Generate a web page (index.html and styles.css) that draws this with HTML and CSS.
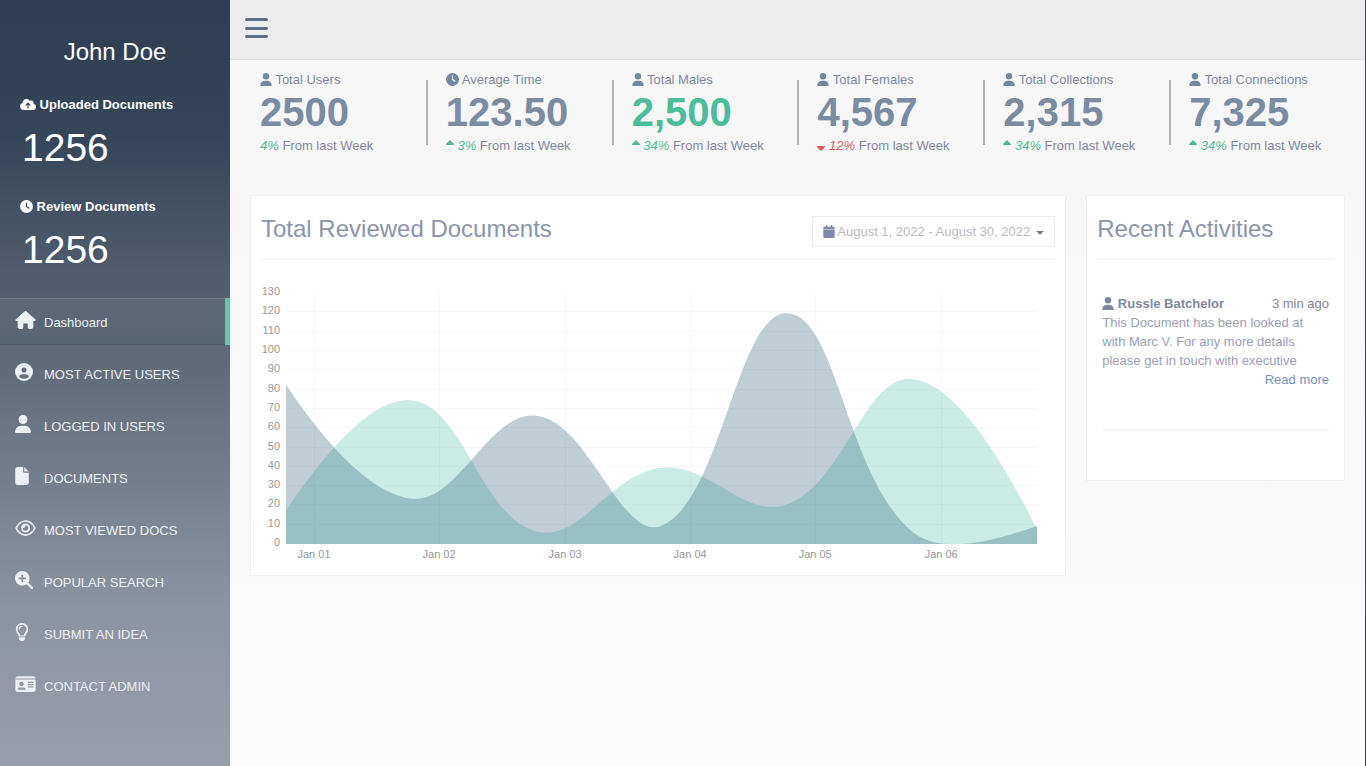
FILE: index.html
```html
<!DOCTYPE html>
<html lang="en">
<head>
<meta charset="utf-8">
<title>Dashboard</title>
<link rel="stylesheet" href="styles.css">
</head>
<body>
<svg class="sprite" aria-hidden="true">
  <symbol id="user" viewBox="0 0 448 512"><path d="M224 256A128 128 0 1 0 224 0a128 128 0 1 0 0 256zm-45.700 48C79.800 304 0 383.800 0 482.300 0 498.700 13.300 512 29.700 512h388.600c16.400 0 29.700-13.300 29.700-29.700 0-98.500-79.800-178.300-178.300-178.300z"/></symbol>
  <symbol id="clock" viewBox="0 0 512 512"><path d="M256 0a256 256 0 1 1 0 512A256 256 0 1 1 256 0zM232 120v136c0 8 4 15.500 10.700 20l96 64c11 7.400 25.900 4.400 33.300-6.700s4.400-25.900-6.700-33.300L280 243.200V120c0-13.300-10.700-24-24-24s-24 10.700-24 24z"/></symbol>
  <symbol id="cloud" viewBox="0 0 640 512"><path d="M144 480C64.500 480 0 415.500 0 336c0-62.800 40.200-116.200 96.200-135.900-.1-2.700-.2-5.400-.2-8.100 0-88.400 71.600-160 160-160 59.300 0 111 32.200 138.700 80.200C409.900 102 428.300 96 448 96c53 0 96 43 96 96 0 12.200-2.300 23.800-6.400 34.600C596 238.400 640 290.100 640 352c0 70.700-57.300 128-128 128zm79-217c-9.400 9.400-9.400 24.600 0 33.900s24.600 9.400 33.900 0l39-39V392c0 13.300 10.700 24 24 24s24-10.700 24-24V257.900l39 39c9.400 9.400 24.600 9.400 33.900 0s9.400-24.600 0-33.900l-80-80c-9.400-9.400-24.600-9.400-33.900 0z"/></symbol>
  <symbol id="home" viewBox="0 0 576 512"><path d="M575.800 255.500c0 18-15 32.100-32 32.100h-32l.7 160.200c.2 35.500-28.500 64.300-64 64.300H392c-22.100 0-40-17.900-40-40v-88c0-17.700-14.300-32-32-32h-64c-17.700 0-32 14.300-32 32v88c0 22.100-17.900 40-40 40h-55.900c-35.300 0-64-28.700-64-64V287.600H32c-18 0-32-14-32-32.100 0-9 3-17 10-24L266.400 8c7-7 15-8 22-8s15 2 21 7l255.400 224.500c8 7 12 15 11 24z"/></symbol>
  <symbol id="circle-user" viewBox="0 0 512 512"><path d="M399 384.200C376.900 345.800 335.400 320 288 320h-64c-47.400 0-88.900 25.800-111 64.200C148.200 423.400 199.200 448 256 448s107.800-24.700 143-63.800zM0 256a256 256 0 1 1 512 0A256 256 0 1 1 0 256zm256 16a72 72 0 1 0 0-144 72 72 0 1 0 0 144z"/></symbol>
  <symbol id="file" viewBox="0 0 384 512"><path d="M0 64C0 28.700 28.700 0 64 0h160v128c0 17.700 14.300 32 32 32h128v288c0 35.300-28.700 64-64 64H64c-35.300 0-64-28.700-64-64zm384 64H256V0z"/></symbol>
  <symbol id="eye" viewBox="0 0 576 512"><path d="M288 80c-65.200 0-118.800 29.600-159.900 67.700C89.600 183.500 63 226 49.400 256 63 286 89.600 328.500 128 364.300 169.200 402.400 222.800 432 288 432s118.800-29.600 159.900-67.700C486.400 328.500 513 286 526.600 256 513 226 486.400 183.500 448 147.700 406.800 109.600 353.200 80 288 80zM95.400 112.600C142.500 68.800 207.200 32 288 32s145.500 36.800 192.600 80.600c46.800 43.500 78.100 95.400 93 131.100 3.300 7.900 3.300 16.700 0 24.600-14.900 35.700-46.200 87.700-93 131.100C433.500 443.200 368.800 480 288 480s-145.500-36.800-192.600-80.600C48.600 356 17.300 304 2.500 268.300a32 32 0 0 1 0-24.600C17.300 208 48.600 156 95.400 112.600zM288 336c44.200 0 80-35.800 80-80s-35.800-80-80-80h-2c1.300 5.100 2 10.500 2 16 0 35.300-28.700 64-64 64-5.500 0-10.900-.7-16-2v2c0 44.200 35.800 80 80 80zm0-208a128 128 0 1 1 0 256 128 128 0 1 1 0-256z"/></symbol>
  <symbol id="search" viewBox="0 0 512 512"><path d="M416 208c0 45.900-14.900 88.300-40 122.700L502.600 457.400c12.500 12.500 12.500 32.800 0 45.300s-32.800 12.500-45.300 0L330.700 376C296.300 401.200 253.900 416 208 416 93.100 416 0 322.900 0 208S93.100 0 208 0s208 93.100 208 208zM184 296c0 13.300 10.700 24 24 24s24-10.700 24-24v-64h64c13.300 0 24-10.700 24-24s-10.700-24-24-24h-64v-64c0-13.300-10.700-24-24-24s-24 10.700-24 24v64h-64c-13.300 0-24 10.700-24 24s10.700 24 24 24h64z"/></symbol>
  <symbol id="bulb" viewBox="0 0 384 512"><path d="M297.200 248.900C311.600 228.300 320 203.200 320 176c0-70.700-57.300-128-128-128S64 105.300 64 176c0 27.200 8.400 52.300 22.800 72.900 20 28.500 46.100 61.900 54.800 103.100h100.800c8.700-41.200 34.800-74.600 54.800-103.100zM336 276c-20 28-40 54-46 92-2 10-8 16-18 16H112c-10 0-16-6-18-16-6-38-26-64-46-92-20-28-32-63-32-100a176 176 0 1 1 352 0c0 37-12 72-32 100zM104 408h176v24c0 44.200-35.800 80-80 80h-16c-44.200 0-80-35.800-80-80zM192 80c9 0 16 7 16 16s-7 16-16 16c-35 0-64 29-64 64 0 9-7 16-16 16s-16-7-16-16c0-53 43-96 96-96z"/></symbol>
  <symbol id="card" viewBox="0 0 576 512"><path d="M0 96c0-35.300 28.700-64 64-64h448c35.300 0 64 28.700 64 64zM0 128h576v288c0 35.300-28.700 64-64 64H64c-35.300 0-64-28.700-64-64zm64 277.300c0 5.900 4.800 10.700 10.700 10.700h202.600c5.900 0 10.700-4.800 10.700-10.700 0-29.500-23.900-53.300-53.300-53.300H117.300C87.900 352 64 375.900 64 405.300zM176 320a64 64 0 1 0 0-128 64 64 0 1 0 0 128zm176-128v32h160v-32zm0 64v32h160v-32zm0 64v32h160v-32z"/></symbol>
  <symbol id="calendar" viewBox="0 0 448 512"><path d="M96 32c0-43 64-43 64 0v32h128V32c0-43 64-43 64 0v32h48c26.500 0 48 21.500 48 48v48H0v-48c0-26.500 21.500-48 48-48h48zM0 176h448v288c0 26.500-21.500 48-48 48H48c-26.500 0-48-21.500-48-48z"/></symbol>
  <symbol id="up" viewBox="0 0 8 14"><path d="M4 2 8.200 6.200Q8.200 7 7.500 7h-7Q-.2 7-.2 6.200z"/></symbol>
  <symbol id="down" viewBox="0 0 8 14"><path d="M4 13 8.200 8.800Q8.200 8 7.500 8h-7Q-.2 8-.2 8.800z"/></symbol>
</svg>
<div class="page">
  <aside class="sidebar">
    <h2 class="profile">John Doe</h2>
    <section class="summary">
      <h3 class="summary-title"><svg class="icon wide"><use href="#cloud"/></svg> Uploaded Documents</h3>
      <p class="summary-value">1256</p>
    </section>
    <section class="summary">
      <h3 class="summary-title"><svg class="icon round"><use href="#clock"/></svg> Review Documents</h3>
      <p class="summary-value">1256</p>
    </section>
    <nav class="menu">
      <a class="menu-item active" href="#"><svg class="w-21"><use href="#home"/></svg><span>Dashboard</span></a>
      <a class="menu-item" href="#"><svg class="w-18"><use href="#circle-user"/></svg><span>MOST ACTIVE USERS</span></a>
      <a class="menu-item" href="#"><svg class="w-16"><use href="#user"/></svg><span>LOGGED IN USERS</span></a>
      <a class="menu-item" href="#"><svg class="w-14"><use href="#file"/></svg><span>DOCUMENTS</span></a>
      <a class="menu-item" href="#"><svg class="w-21"><use href="#eye"/></svg><span>MOST VIEWED DOCS</span></a>
      <a class="menu-item" href="#"><svg class="w-18"><use href="#search"/></svg><span>POPULAR SEARCH</span></a>
      <a class="menu-item" href="#"><svg class="w-14"><use href="#bulb"/></svg><span>SUBMIT AN IDEA</span></a>
      <a class="menu-item" href="#"><svg class="w-21"><use href="#card"/></svg><span>CONTACT ADMIN</span></a>
    </nav>
  </aside>
  <div class="content">
    <header class="topbar">
      <button class="toggle" type="button" aria-label="Toggle menu"><span></span><span></span><span></span></button>
    </header>
    <main class="main">
      <div class="stats">
        <section class="stat"><h4><svg class="icon"><use href="#user"/></svg> Total Users</h4><strong>2500</strong><p><em>4%</em> From last Week</p></section>
        <section class="stat"><h4><svg class="icon round"><use href="#clock"/></svg> Average Time</h4><strong>123.50</strong><p><em><svg class="caret"><use href="#up"/></svg> 3%</em> From last Week</p></section>
        <section class="stat"><h4><svg class="icon"><use href="#user"/></svg> Total Males</h4><strong class="green">2,500</strong><p><em><svg class="caret"><use href="#up"/></svg> 34%</em> From last Week</p></section>
        <section class="stat"><h4><svg class="icon"><use href="#user"/></svg> Total Females</h4><strong>4,567</strong><p><em class="red"><svg class="caret"><use href="#down"/></svg> 12%</em> From last Week</p></section>
        <section class="stat"><h4><svg class="icon"><use href="#user"/></svg> Total Collections</h4><strong>2,315</strong><p><em><svg class="caret"><use href="#up"/></svg> 34%</em> From last Week</p></section>
        <section class="stat"><h4><svg class="icon"><use href="#user"/></svg> Total Connections</h4><strong>7,325</strong><p><em><svg class="caret"><use href="#up"/></svg> 34%</em> From last Week</p></section>
      </div>
      <div class="panels">
        <section class="panel">
          <header class="panel-head">
            <h2>Total Reviewed Documents</h2>
            <button class="range" type="button"><svg class="icon"><use href="#calendar"/></svg><span>August 1, 2022 - August 30, 2022</span><i class="arrow"></i></button>
          </header>
          <svg class="chart" id="chart" viewBox="0 0 794 285" role="img" aria-label="Reviewed documents by day"></svg>
        </section>
        <section class="panel">
          <header class="panel-head"><h2>Recent Activities</h2></header>
          <article class="activity">
            <div class="activity-head"><b><svg class="icon"><use href="#user"/></svg> Russle Batchelor</b><time>3 min ago</time></div>
            <p>This Document has been looked at with Marc V. For any more details please get in touch with executive</p>
            <a href="#">Read more</a>
          </article>
        </section>
      </div>
    </main>
  </div>
</div>
<script src="chart.js"></script>
</body>
</html>
```
FILE: styles.css
```css
* { box-sizing: border-box; }
body {
  margin: 0;
  font: 13px/19px "Liberation Sans", Arial, sans-serif;
  color: #8088a0;
  background: #fcfcfd;
}
h2, h3, h4, p { margin: 0; font-weight: 400; }
a { text-decoration: none; }
svg { fill: currentColor; }
.sprite { display: none; }
.icon { width: 12px; height: 13px; vertical-align: -2px; }
.icon.round { width: 13px; }
.icon.wide { width: 16px; }

.page { display: flex; min-height: 100vh; border-right: 1px solid #3c3e42; }

.sidebar {
  flex: 0 0 230px;
  color: #fff;
  background: linear-gradient(#2e3e52, #35465a 18%, #525f70 38%, #66707f 52%, #7c8592 68%, #8d94a1 80%, #989eaa);
}
.profile { padding: 37px 0 27px; font-size: 24px; line-height: 30px; text-align: center; }
.summary { height: 102px; padding: 0 20px; }
.summary-title { font-size: 13px; font-weight: 700; line-height: 21px; }
.summary-value { padding: 9px 0 0 2px; font-size: 39px; line-height: 48px; }
.menu { display: flex; flex-direction: column; gap: 5px; }
.menu-item {
  display: flex;
  align-items: center;
  height: 47px;
  padding-left: 15px;
  color: #edf0f3;
}
.menu-item svg { height: 18px; margin-bottom: 4px; }
.menu-item span { flex: 1; padding: 1px 0 0 8px; }
.w-21 { width: 21px; }
.w-18 { width: 18px; margin-right: 3px; }
.w-16 { width: 16px; margin-right: 5px; }
.w-14 { width: 14px; margin-right: 7px; }
.menu-item.active {
  border-right: 5px solid #62c7ae;
  background: linear-gradient(#5b6877, #576675);
  box-shadow: inset 0 1px #6c7989, inset 0 -1px #4c5967;
}

.content { flex: 1; min-width: 0; background: linear-gradient(#f7f7f7 20%, #f9f9f9 75%, #fcfcfd 85%); }
.topbar { height: 60px; padding: 18px 15px; background: #ededed; border-bottom: 1px solid #dddfe2; }
.toggle {
  display: flex;
  flex-direction: column;
  justify-content: space-between;
  width: 23px;
  height: 20px;
  padding: 0;
  border: 0;
  background: none;
}
.toggle span { height: 3px; border-radius: 2px; background: #5f6f89; }
.main { padding: 10px; }
.stats { display: grid; grid-template-columns: repeat(6, 1fr); }
.stat { height: 125px; padding: 0 10px 0 20px; white-space: nowrap; }
.stat h4 { font-size: 13px; }
.stat strong { display: block; font-size: 40px; line-height: 46px; color: #7b8ba1; }
.stat p { line-height: 21px; }
.stat strong.green { color: #49be9a; }
.stat .icon { color: #7288a0; }
.stat em { color: #52bd94; }
.stat em.red { color: #e05a58; }
.stat .caret { width: 8px; height: 14px; vertical-align: -2px; }
.stat + .stat { background: linear-gradient(#b3b4b7, #b3b4b7) 0 10px / 2px 65px no-repeat; }
.panels { display: grid; grid-template-columns: 3fr 1fr; align-items: start; }
.panel { margin: 0 10px; padding: 10px; border: 1px solid #f0f0f2; background: #fff; min-width: 0; }
.panel-head {
  display: flex;
  justify-content: space-between;
  height: 54px;
  padding-top: 10px;
  border-bottom: 2px solid #f6f6f7;
}
.panel-head h2 { font-size: 24px; line-height: 26px; color: #8b95aa; white-space: nowrap; }
.range {
  display: flex;
  align-items: center;
  height: 31px;
  padding: 0 10px;
  border: 1px solid #ebecef;
  background: #fff;
  font: inherit;
  color: #bbbcc0;
}
.range .icon { margin-right: 2px; color: #8088a8; }
.arrow { margin: 3px 0 0 6px; border: 4px solid transparent; border-top-color: #777d84; border-bottom: 0; }
.chart { display: block; width: 100%; margin-top: 20px; font-size: 11px; }
.chart .grid { fill: none; stroke: #f7f7f8; stroke-width: 1; }
.chart text { fill: #96999c; }
.chart .y-label { text-anchor: end; }
.chart .x-label { text-anchor: middle; }
.chart .series-a { fill: rgba(38, 175, 145, 0.24); }
.chart .series-b { fill: rgba(20, 75, 98, 0.27); }
.activity { margin: 34px 5px 39px; padding-bottom: 40px; border-bottom: 2px solid #f7f7f8; }
.activity-head { display: flex; justify-content: space-between; }
.activity p { color: #98a0b2; }
.activity a { display: block; text-align: right; color: #7593c0; }
```
FILE: chart.js
```js
const chart = document.getElementById('chart');
const NS = 'http://www.w3.org/2000/svg';
const left = 25, right = 776, base = 264, zero = 263, unit = 1.93;

function add(name, attrs, text) {
  const el = document.createElementNS(NS, name);
  for (const key in attrs) el.setAttribute(key, attrs[key]);
  if (text !== undefined) el.textContent = text;
  chart.appendChild(el);
}

for (let v = 0; v <= 130; v += 10) {
  const y = Math.round(zero - v * unit);
  if (v > 0 && v < 130) add('path', { class: 'grid', d: `M${left} ${y + 0.5}H${right}` });
  add('text', { class: 'y-label', x: 19, y: y + 3 }, v);
}

['Jan 01', 'Jan 02', 'Jan 03', 'Jan 04', 'Jan 05', 'Jan 06'].forEach((day, i) => {
  const x = Math.round(53 + i * 125.3);
  add('path', { class: 'grid', d: `M${x + 0.5} 13V${base}` });
  add('text', { class: 'x-label', x, y: 278 }, day);
});

// Area below a cubic spline; the first and last segments are quadratic.
function area(values, cls) {
  const tension = 0.4;
  const p = values.map((v, i) => [left + (right - left) * i / (values.length - 1), zero - v * unit]);
  const handles = p.map((b, i) => {
    const a = p[i - 1], c = p[i + 1];
    if (!a || !c) return null;
    const d1 = Math.hypot(b[0] - a[0], b[1] - a[1]);
    const d2 = Math.hypot(c[0] - b[0], c[1] - b[1]);
    const before = tension * d1 / (d1 + d2), after = tension - before;
    return {
      before: [b[0] + before * (a[0] - c[0]), b[1] + before * (a[1] - c[1])],
      after: [b[0] - after * (a[0] - c[0]), b[1] - after * (a[1] - c[1])]
    };
  });
  let d = `M${p[0]}`;
  for (let i = 1; i < p.length; i++) {
    if (i === 1) d += `Q${handles[1].before} ${p[1]}`;
    else if (i === p.length - 1) d += `Q${handles[i - 1].after} ${p[i]}`;
    else d += `C${handles[i - 1].after} ${handles[i].before} ${p[i]}`;
  }
  add('path', { class: cls, d: `${d}V${base}H${left}Z` });
}

area([17, 74, 6, 39, 20, 85, 7], 'series-a');
area([82, 23, 66, 9, 119, 6, 9], 'series-b');
```
